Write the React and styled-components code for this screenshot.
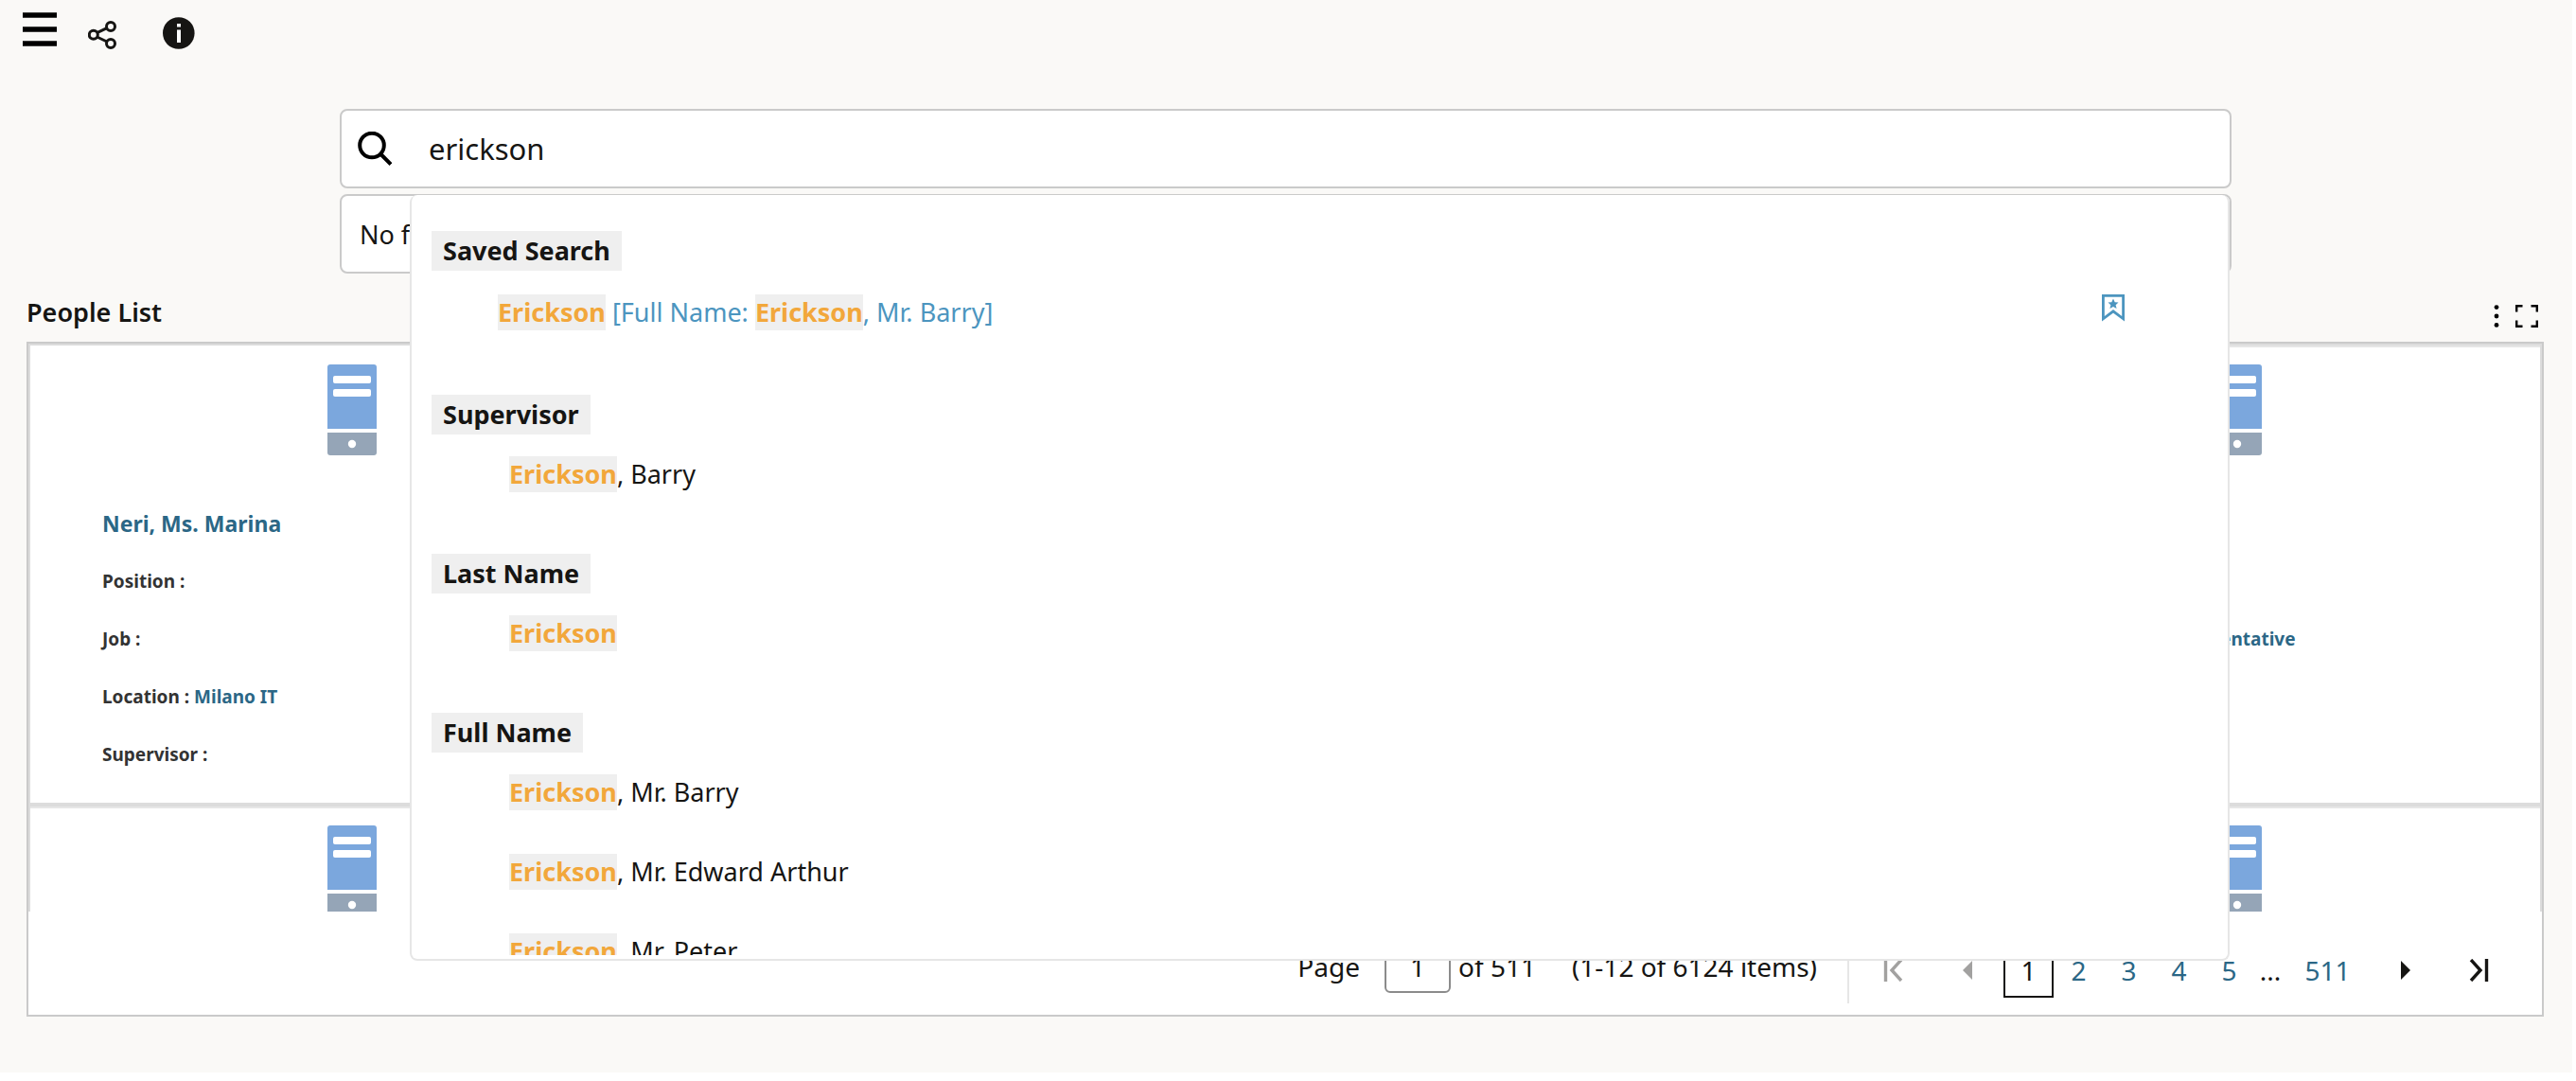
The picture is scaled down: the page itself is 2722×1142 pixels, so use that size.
import React from "react";
import styled, { createGlobalStyle } from "styled-components";

const Global = createGlobalStyle`
  * { box-sizing: border-box; }
  body { margin: 0; background: #fff; font-family: "Noto Sans", "Open Sans", sans-serif; color: #161513; }
  button, input { font: inherit; color: inherit; }
  button { padding: 0; border: 0; background: none; display: flex; align-items: center; justify-content: center; cursor: pointer; }
  a { text-decoration: none; }
  h2, h3, p, ul { margin: 0; padding: 0; list-style: none; }
  svg { display: block; flex: none; }
`;

const Page = styled.div`
  margin-right: 4px;
  padding-bottom: 59px;
  background: #faf9f7;
`;
const Toolbar = styled.header`
  display: flex;
  align-items: flex-start;
  height: 115px;
  padding: 13px 24px 0;
`;
const ToolButton = styled.button`
  height: 40px;
  margin-right: ${(p) => p.$gap || 0}px;
`;
const Content = styled.div`
  padding: 0 30px 0 28px;
`;
const SearchArea = styled.section`
  position: relative;
  display: flex;
  flex-direction: column;
  gap: 6px;
  margin: 0 330px 0 331px;
`;
const Box = styled.div`
  display: flex;
  align-items: center;
  height: 84px;
  padding: 0 17px;
  background: #fff;
  border: 2px solid #cacaca;
  border-radius: 8px;
`;
const SearchInput = styled.input`
  flex: 1;
  min-width: 0;
  margin-left: 39px;
  padding: 0;
  border: 0;
  outline: 0;
  background: none;
  font-size: 31px;
`;
const Filters = styled.p`
  margin-left: 2px;
  font-size: 27px;
`;
const Dropdown = styled.div`
  position: absolute;
  z-index: 2;
  top: 91px;
  left: 74px;
  right: 2px;
  height: 809px;
  padding-bottom: 4px;
  background: #fff;
  border: 2px solid #e6e6e6;
  border-top: 0;
  border-radius: 8px;
`;
const Suggestions = styled.div`
  height: 100%;
  overflow: hidden;
  padding: 38px 109px 0 21px;
  font-size: 27px;
`;
const Group = styled.section`
  margin-bottom: 65px;
`;
const GroupTitle = styled.h3`
  width: max-content;
  padding: 0 12px;
  background: #efefef;
  font-size: 27px;
  font-weight: 700;
  line-height: 42px;
`;
const SavedRow = styled.div`
  display: flex;
  align-items: flex-start;
  justify-content: space-between;
  padding: 25px 0 3px 70px;
`;
const SavedLink = styled.a`
  color: #4c95bf;
  line-height: 38px;
`;
const Option = styled.li`
  margin-top: ${(p) => (p.$first ? 23 : 46)}px;
  padding-left: 82px;
  line-height: 38px;
`;
const Mark = styled.mark`
  display: inline-block;
  background: #efefef;
  color: #f2a73b;
  font-weight: 700;
`;
const ListHeader = styled.div`
  display: flex;
  align-items: center;
  justify-content: space-between;
  height: 72px;
  padding: 10px 6px 0 0;
`;
const ListTitle = styled.h2`
  font-size: 27px;
  font-weight: 600;
  line-height: 36px;
`;
const Actions = styled.div`
  display: flex;
  gap: 16px;
  padding-top: 8px;
`;
const Panel = styled.main`
  border: 2px solid #cacaca;
  background: #fff;
`;
const Cards = styled.ul`
  height: 600px;
  overflow: hidden;
  border: 2px solid #dcdcdc;
  border-bottom: 0;
`;
const CardRow = styled.li`
  display: grid;
  grid-template-columns: repeat(4, calc(25% + 1px));
  height: 487px;
  border-bottom: 4px solid #dcdcdc;
`;
const Card = styled.article`
  display: flex;
  flex-direction: column;
  padding: 18px 0 0 76px;
  border-top: 2px solid ${(p) => (p.$ridge ? "#e6e6e6" : "transparent")};
`;
const Avatar = styled.div`
  align-self: center;
  height: 146px;
  margin-right: 60px;
`;
const Name = styled.a`
  height: 44px;
  margin-bottom: 9px;
  color: #2b6786;
  font-size: 23px;
  font-weight: 700;
  line-height: 44px;
`;
const Field = styled.p`
  color: #333;
  font-size: 19px;
  font-weight: 700;
  line-height: 61px;
  white-space: nowrap;
`;
const FieldLink = styled.a`
  color: #2b6786;
`;
const Pager = styled.nav`
  display: flex;
  align-items: center;
  justify-content: flex-end;
  height: 109px;
  padding: 15px 29px 0 0;
  font-size: 28px;
`;
const PageLabel = styled.label`
  display: flex;
  align-items: center;
  gap: 26px;
  padding-bottom: 8px;
`;
const PageInput = styled.input`
  width: 70px;
  height: 56px;
  padding: 0;
  text-align: center;
  background: #fff;
  border: 2px solid #8b8b8b;
  border-radius: 6px;
`;
const Range = styled.span`
  margin-left: ${(p) => p.$gap}px;
  padding-bottom: 8px;
`;
const Divider = styled.span`
  width: 2px;
  height: 70px;
  margin: 0 8px 0 32px;
  background: #e6e6e6;
`;
const PageButton = styled.button`
  width: ${(p) => p.$width || 53}px;
  height: 58px;
  color: #2b6786;
  ${(p) => p.$current && "border: 2px solid #161513; color: #161513;"}
  ${(p) => p.$step && "color: #161513;"}
  &:disabled { color: #a2a1a0; }
`;
const Dots = styled.span`
  width: 34px;
  text-align: center;
`;

const MenuIcon = () => (
  <svg width="36" height="40" viewBox="0 0 36 40" aria-hidden="true">
    <path d="M0 3H36M0 18H36M0 33H36" stroke="#000" strokeWidth="5.5" />
  </svg>
);
const ShareIcon = () => (
  <svg width="30" height="40" viewBox="0 0 30 40" fill="none" stroke="#161513" strokeWidth="3" aria-hidden="true">
    <path d="M9.5 21.7L20 16.7M9.5 26L20 31" />
    <circle cx="5.8" cy="23.8" r="4.5" />
    <circle cx="24" cy="15" r="4.5" />
    <circle cx="24" cy="33" r="4.5" />
  </svg>
);
const InfoIcon = () => (
  <svg width="34" height="40" viewBox="0 0 34 40" aria-hidden="true">
    <circle cx="16.8" cy="22" r="16.8" fill="#161513" />
    <path d="M15 12H19V15.500H15ZM15 18.500H19V32H15Z" fill="#fff" />
  </svg>
);
const SearchIcon = () => (
  <svg width="36" height="36" viewBox="0 0 36 36" fill="none" stroke="#000" strokeWidth="4" aria-hidden="true">
    <circle cx="15" cy="14.500" r="12.800" />
    <path d="M24.500 24L35 34.500" />
  </svg>
);
const BookmarkIcon = () => (
  <svg width="24" height="29" viewBox="0 0 24 29" aria-hidden="true">
    <path d="M1.400 1.400H22.600V25.800L12 17.800L1.400 25.800Z" fill="none" stroke="#4c95bf" strokeWidth="2.800" />
    <path d="M12 4.500L13.700 8.300L17.500 8.600L14.600 11.200L15.600 15L12 13L8.400 15L9.400 11.200L6.500 8.600L10.300 8.300Z" fill="#4c95bf" />
  </svg>
);
const MoreIcon = () => (
  <svg width="8" height="24" viewBox="0 0 8 24" aria-hidden="true">
    <circle cx="4" cy="2.600" r="2.400" />
    <circle cx="4" cy="12" r="2.400" />
    <circle cx="4" cy="21.400" r="2.400" />
  </svg>
);
const ExpandIcon = () => (
  <svg width="24" height="24" viewBox="0 0 24 24" fill="none" stroke="#000" strokeWidth="2.400" aria-hidden="true">
    <path d="M1.200 7.500V1.200H7.500M16.500 1.200H22.800V7.500M22.800 16.500V22.800H16.500M7.500 22.800H1.200V16.500" />
  </svg>
);
const ServerIcon = () => (
  <svg width="54" height="96" viewBox="0 0 54 96" aria-hidden="true">
    <path d="M4 0H50Q53 0 53 3V68H1V3Q1 0 4 0Z" fill="#7ba7dd" />
    <rect x="7" y="12" width="40" height="8" rx="2" fill="#fff" />
    <rect x="7" y="26" width="40" height="8" rx="2" fill="#fff" />
    <path d="M1 72H53V93Q53 96 50 96H4Q1 96 1 93Z" fill="#95a5b7" />
    <circle cx="27" cy="84" r="4.200" fill="#fff" />
  </svg>
);
const EdgeIcon = ({ flip }) => (
  <svg width="22" height="24" viewBox="0 0 22 24" fill="none" stroke="currentColor" strokeWidth="3.400" aria-hidden="true">
    {flip ? <path d="M3 1L13 12L3 23M19.500 0V24" /> : <path d="M19 1L9 12L19 23M2.500 0V24" />}
  </svg>
);
const ArrowIcon = ({ flip }) => (
  <svg width="10" height="20" viewBox="0 0 10 20" fill="currentColor" aria-hidden="true">
    {flip ? <path d="M0 0L10 10L0 20Z" /> : <path d="M10 0L0 10L10 20Z" />}
  </svg>
);

const rows = [
  [
    { name: "Neri, Ms. Marina", location: "Milano IT" },
    {},
    {},
    { job: "Sales Account Representative", ridge: true },
  ],
  [{ ridge: true }, { ridge: true }, { ridge: true }, { ridge: true }],
];

const groups = [
  { title: "Supervisor", items: [", Barry"] },
  { title: "Last Name", items: [""] },
  { title: "Full Name", items: [", Mr. Barry", ", Mr. Edward Arthur", ", Mr. Peter"] },
];

function PersonCard({ person }) {
  const { name, job, location, ridge } = person;
  return (
    <Card $ridge={ridge}>
      <Avatar><ServerIcon /></Avatar>
      {(name || job) && (
        <>
          <Name href="#">{name}</Name>
          <Field>Position :</Field>
          <Field>Job : {job && <FieldLink href="#">{job}</FieldLink>}</Field>
          <Field>Location : {location && <FieldLink href="#">{location}</FieldLink>}</Field>
          <Field>Supervisor :</Field>
        </>
      )}
    </Card>
  );
}

export default function App() {
  return (
    <>
      <Global />
      <Page>
        <Toolbar>
          <ToolButton $gap={33} aria-label="Menu"><MenuIcon /></ToolButton>
          <ToolButton $gap={49} aria-label="Share"><ShareIcon /></ToolButton>
          <ToolButton aria-label="Information"><InfoIcon /></ToolButton>
        </Toolbar>
        <Content>
          <SearchArea>
            <Box>
              <SearchIcon />
              <SearchInput aria-label="Search" defaultValue="erickson" />
            </Box>
            <Box><Filters>No filters applied</Filters></Box>
            <Dropdown>
              <Suggestions>
                <Group>
                  <GroupTitle>Saved Search</GroupTitle>
                  <SavedRow>
                    <SavedLink href="#"><Mark>Erickson</Mark> [Full Name: <Mark>Erickson</Mark>, Mr. Barry]</SavedLink>
                    <button aria-label="Saved search"><BookmarkIcon /></button>
                  </SavedRow>
                </Group>
                {groups.map((g) => (
                  <Group key={g.title}>
                    <GroupTitle>{g.title}</GroupTitle>
                    <ul>
                      {g.items.map((t, i) => <Option key={t} $first={i === 0}><Mark>Erickson</Mark>{t}</Option>)}
                    </ul>
                  </Group>
                ))}
              </Suggestions>
            </Dropdown>
          </SearchArea>
          <ListHeader>
            <ListTitle>People List</ListTitle>
            <Actions>
              <button aria-label="More actions"><MoreIcon /></button>
              <button aria-label="Full screen"><ExpandIcon /></button>
            </Actions>
          </ListHeader>
          <Panel>
            <Cards>
              {rows.map((row, r) => (
                <CardRow key={r}>{row.map((p, i) => <PersonCard key={i} person={p} />)}</CardRow>
              ))}
            </Cards>
            <Pager aria-label="Pages">
              <PageLabel>Page <PageInput defaultValue="1" /></PageLabel>
              <Range $gap={8}>of 511</Range>
              <Range $gap={38}>(1-12 of 6124 items)</Range>
              <Divider />
              <PageButton $width={78} disabled aria-label="First page"><EdgeIcon /></PageButton>
              <PageButton $width={77} disabled aria-label="Previous page"><ArrowIcon /></PageButton>
              <PageButton $current>1</PageButton>
              <PageButton>2</PageButton>
              <PageButton>3</PageButton>
              <PageButton>4</PageButton>
              <PageButton>5</PageButton>
              <Dots>...</Dots>
              <PageButton $width={87}>511</PageButton>
              <PageButton $width={78} $step aria-label="Next page"><ArrowIcon flip /></PageButton>
              <PageButton $width={76} $step aria-label="Last page"><EdgeIcon flip /></PageButton>
            </Pager>
          </Panel>
        </Content>
      </Page>
    </>
  );
}
